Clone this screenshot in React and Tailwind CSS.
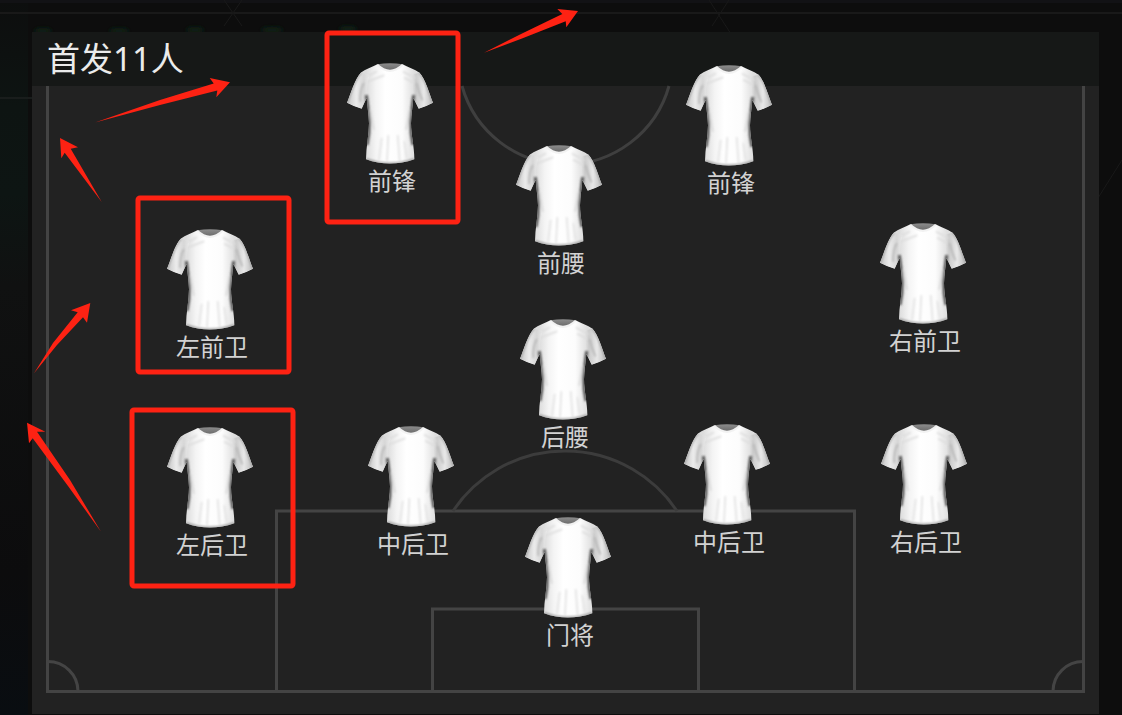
const BOARD = { width: 1067, height: 682 };

// x is the middle of the shirt, y its top edge, both in board units
const players = [
  { id: "st-l", role: "前锋", x: 358, y: 31 },
  { id: "st-r", role: "前锋", x: 697, y: 33 },
  { id: "am", role: "前腰", x: 527, y: 113 },
  { id: "lm", role: "左前卫", x: 178, y: 197 },
  { id: "rm", role: "右前卫", x: 891, y: 191 },
  { id: "dm", role: "后腰", x: 531, y: 287 },
  { id: "lb", role: "左后卫", x: 178, y: 395 },
  { id: "cb-l", role: "中后卫", x: 379, y: 394 },
  { id: "cb-r", role: "中后卫", x: 695, y: 392 },
  { id: "rb", role: "右后卫", x: 892, y: 392 },
  { id: "gk", role: "门将", x: 536, y: 485 },
];

const highlights = [
  { x: 327, y: 33, width: 131, height: 189 },
  { x: 138, y: 198, width: 151, height: 174 },
  { x: 132, y: 410, width: 161, height: 176 },
];

const arrows = [
  "95,122.5 160,100 213.7,83.5 209.7,78 230,82.3 216.3,97.3 217.3,90.5 160,105",
  "101.7,202 70.7,148.7 78,147.3 60,138 61.3,158.3 64.7,152.7",
  "484,52.7 520,34.5 562.3,14 557.3,9 578,11 566.3,27.3 565.7,21.3 522,38.5",
  "34,373.3 53,343 77.7,312.3 71,310.3 90.3,303 87,322.7 83,317.3 57,345",
  "101,531.7 70,480 37,431.7 45.3,431.7 27,422.7 29,443.3 32.7,438.3 68,486",
];

const Shirt = () => (
  <svg
    viewBox="0 0 258 302"
    className="block h-[101px] w-[86px]"
    aria-hidden="true"
  >
    <path d="M91 3 Q129 -2 167 3 L162 28 H96 Z" fill="url(#shirt-neck)" />
    <use href="#shirt-shape" fill="url(#shirt-body)" />
    <g clipPath="url(#shirt-clip)">
      <path
        d="M42 28 C24 46 12 90 0 119 Q20 130 44 137 L60 103 Q57 66 68 36 Z"
        fill="url(#shirt-sleeve-l)"
      />
      <path
        d="M217 28 C235 46 246 90 258 119 Q238 130 215 137 L198 103 Q201 66 190 36 Z"
        fill="url(#shirt-sleeve-r)"
      />
      <g fill="none" filter="url(#shirt-soft)">
        <path
          d="M58 96 C62 130 66 155 67 180 C67 200 65 220 60 245"
          stroke="#555555"
          strokeWidth="9"
        />
        <path
          d="M200 96 C196 130 192 155 191 180 C191 200 193 220 198 245"
          stroke="#555555"
          strokeWidth="9"
        />
        <path
          d="M70 140 L80 200 M188 140 L178 200"
          stroke="#dadada"
          strokeWidth="6"
        />
        <path
          d="M50 60 Q38 84 40 116 M209 60 Q214 84 226 112"
          stroke="#b4b4b4"
          strokeWidth="5"
        />
        <path
          d="M104 224 L96 290 M124 216 L120 294 M152 216 L158 294 M172 234 L180 286"
          stroke="#e2e2e2"
          strokeWidth="5"
        />
        <path
          d="M53 44 L90 24 M60 56 L112 36 M207 46 L168 25 M200 58 L172 44"
          stroke="#dcdcdc"
          strokeWidth="5"
        />
        <path
          d="M42 28 C24 46 12 90 0 119 M217 28 C235 46 246 90 258 119"
          stroke="#9c9c9c"
          strokeWidth="5"
        />
        <path
          d="M57 288 Q128 314 202 288"
          stroke="#9a9a9a"
          strokeWidth="6"
        />
      </g>
    </g>
    <path
      d="M91 5 Q129 41 167 5"
      fill="none"
      stroke="#f2f2f2"
      strokeWidth="6"
    />
  </svg>
);

// Shape, gradients and blur shared by every shirt on the board
const ShirtDefs = () => (
  <svg className="absolute size-0" aria-hidden="true">
    <defs>
      <path
        id="shirt-shape"
        d="M91 3 C76 11 54 18 42 28 C24 46 12 90 0 119 Q20 130 44 137 L59 104 C61 130 65 155 66 180 C66 215 57 250 57 288 Q128 314 202 288 C202 250 192 215 192 180 C193 155 197 130 199 104 L215 137 Q238 130 258 119 C246 90 235 46 217 28 C204 18 181 11 167 3 Q129 41 91 3 Z"
      />
      <clipPath id="shirt-clip">
        <use href="#shirt-shape" />
      </clipPath>
      <linearGradient id="shirt-neck" x1="0" y1="0" x2="0" y2="1">
        <stop offset="0" stopColor="#8c8c8c" />
        <stop offset="1" stopColor="#5f5f5f" />
      </linearGradient>
      <linearGradient
        id="shirt-body"
        gradientUnits="userSpaceOnUse"
        x1="57"
        y1="0"
        x2="202"
        y2="0"
      >
        <stop offset="0" stopColor="#dcdcdc" />
        <stop offset="0.2" stopColor="#f4f4f4" />
        <stop offset="0.4" stopColor="#ffffff" />
        <stop offset="0.75" stopColor="#fcfcfc" />
        <stop offset="1" stopColor="#dedede" />
      </linearGradient>
      <linearGradient id="shirt-sleeve-l" x1="0" y1="0" x2="1" y2="0">
        <stop offset="0" stopColor="#c4c4c4" />
        <stop offset="0.4" stopColor="#ebebeb" />
        <stop offset="0.75" stopColor="#d6d6d6" />
        <stop offset="1" stopColor="#efefef" />
      </linearGradient>
      <linearGradient id="shirt-sleeve-r" x1="0" y1="0" x2="1" y2="0">
        <stop offset="0" stopColor="#efefef" />
        <stop offset="0.25" stopColor="#cbcbcb" />
        <stop offset="0.6" stopColor="#e8e8e8" />
        <stop offset="1" stopColor="#bababa" />
      </linearGradient>
      <filter id="shirt-soft" x="-10%" y="-10%" width="120%" height="120%">
        <feGaussianBlur stdDeviation="2.5" />
      </filter>
    </defs>
  </svg>
);

const PitchLines = () => (
  <svg
    viewBox="0 0 1067 682"
    className="absolute inset-0 h-full w-full"
    fill="none"
    stroke="#444444"
    strokeWidth="3"
    aria-hidden="true"
  >
    <path d="M15.5 54 V659.5 H1051.5 V54" />
    <path d="M244.5 659 V479 H822.5 V659" />
    <path d="M400.5 659 V577 H666.5 V659" />
    <path d="M421 479 A134.5 134.5 0 0 1 645 479" stroke="#3c3c3c" />
    <path d="M430 54 A107.5 107.5 0 0 0 637 54" stroke="#3f3f3f" />
    <path d="M16 629.5 A30 30 0 0 1 46 659" />
    <path d="M1051 629.5 A30 30 0 0 0 1021 659" />
  </svg>
);

const Backdrop = () => (
  <svg
    viewBox="0 0 1122 715"
    preserveAspectRatio="none"
    className="absolute inset-0 h-full w-full"
    aria-hidden="true"
  >
    <defs>
      <linearGradient id="edge-glow" x1="0" y1="0" x2="0" y2="1">
        <stop offset="0" stopColor="#0d0e0e" />
        <stop offset="0.15" stopColor="#0d1412" />
        <stop offset="0.27" stopColor="#0d1513" />
        <stop offset="0.4" stopColor="#101111" />
        <stop offset="0.8" stopColor="#0c0c0d" />
        <stop offset="1" stopColor="#090d11" />
      </linearGradient>
      <filter id="glow-soft" x="-50%" y="-50%" width="200%" height="200%">
        <feGaussianBlur stdDeviation="2" />
      </filter>
    </defs>
    <rect width="1122" height="715" fill="#0d0d0d" />
    <rect width="28" height="715" fill="url(#edge-glow)" />
    <rect width="1122" height="3" fill="#121215" />
    <rect y="12" width="1122" height="2" fill="#191919" />
    <rect y="97" width="32" height="2" fill="#191d1c" />
    <g fill="#0b2118" filter="url(#glow-soft)">
      <ellipse cx="43" cy="31" rx="9" ry="3" />
      <ellipse cx="119" cy="31" rx="10" ry="3" />
      <ellipse cx="195" cy="30" rx="9" ry="3" />
      <ellipse cx="272" cy="30" rx="11" ry="3" />
      <ellipse cx="348" cy="29" rx="9" ry="3" />
    </g>
    <g stroke="#191919" strokeWidth="1">
      <path d="M224 0 L242 26 M242 0 L224 26" />
      <path d="M709 0 L731 34 M729 0 L712 26" />
      <path d="M1122 160 L1098 198" />
    </g>
  </svg>
);

const Annotations = () => (
  <svg
    viewBox="0 0 1122 715"
    className="pointer-events-none absolute inset-0 h-full w-full"
    aria-hidden="true"
  >
    <g fill="none" stroke="#fe2213" strokeWidth="5">
      {highlights.map((box) => (
        <rect key={`${box.x}-${box.y}`} {...box} rx="2" />
      ))}
    </g>
    <g fill="#fe2213">
      {arrows.map((points) => (
        <polygon key={points} points={points} />
      ))}
    </g>
  </svg>
);

const Player = ({ role, x, y }) => (
  <li
    className="absolute flex -translate-x-1/2 flex-col items-center"
    style={{
      left: `${(x / BOARD.width) * 100}%`,
      top: `${(y / BOARD.height) * 100}%`,
    }}
  >
    <Shirt />
    <span className="mt-1 pl-1 text-2xl leading-6 whitespace-nowrap text-[#d2d2d2]">
      {role}
    </span>
  </li>
);

const App = () => {
  return (
    <div className="min-h-screen bg-[#0d0d0d] font-['Noto_Sans_CJK_SC',sans-serif]">
      <ShirtDefs />
      <main className="relative pt-8 pr-[23px] pb-px pl-8">
        <Backdrop />
        <section className="relative aspect-[1067/682] w-full bg-[#222222]">
          <header className="flex h-[54px] items-center bg-[#161817] pl-[15px]">
            <h1 className="font-['Noto_Sans','Noto_Sans_CJK_SC',sans-serif] text-[33px] leading-9 text-[#ebebeb]">
              首发11人
            </h1>
          </header>
          <PitchLines />
          <ul className="absolute inset-0">
            {players.map((player) => (
              <Player key={player.id} {...player} />
            ))}
          </ul>
        </section>
        <Annotations />
      </main>
    </div>
  );
};

export default App;
